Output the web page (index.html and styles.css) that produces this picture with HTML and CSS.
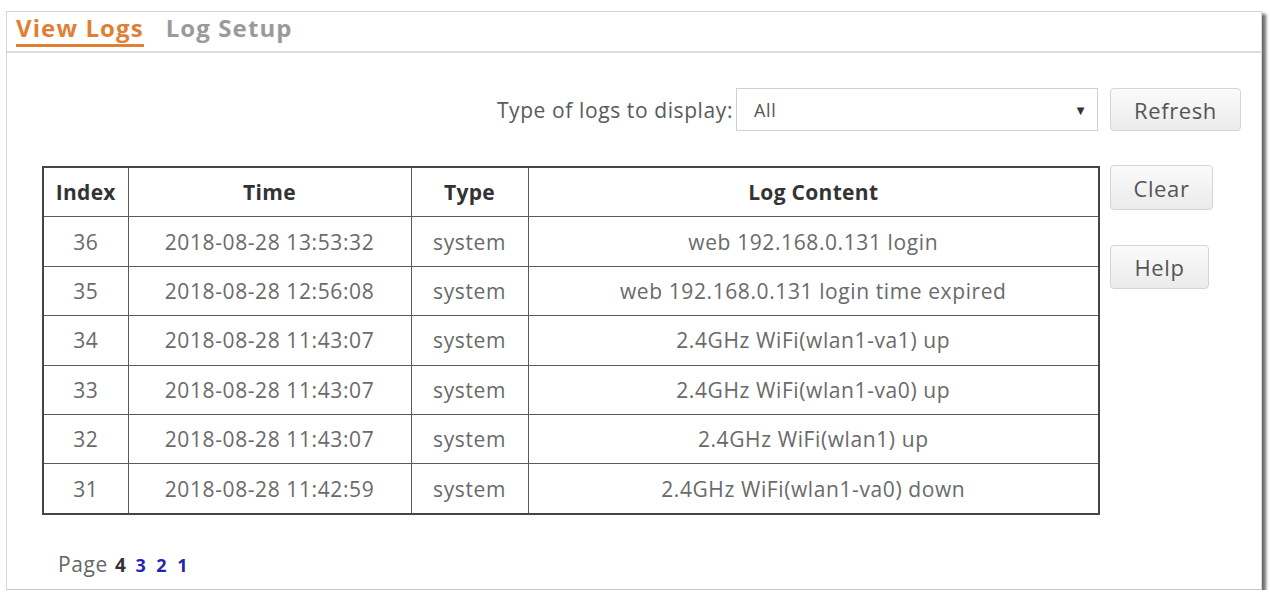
FILE: index.html
```html
<!DOCTYPE html>
<html>
<head>
<meta charset="utf-8">
<link rel="stylesheet" href="styles.css">
</head>
<body>
<div class="frame">
  <div class="tabs">
    <span class="tab active">View Logs</span>
    <span class="tab">Log Setup</span>
  </div>
  <div class="content">
    <div class="controls">
      <span class="label">Type of logs to display:</span>
      <div class="select"><span>All</span><span class="arrow">&#9660;</span></div>
    </div>
    <div class="side-top"><button class="btn btn-refresh">Refresh</button></div>
    <table class="logs">
      <colgroup>
        <col class="c-index"><col class="c-time"><col class="c-type"><col class="c-content">
      </colgroup>
      <thead>
        <tr><th>Index</th><th>Time</th><th>Type</th><th>Log Content</th></tr>
      </thead>
      <tbody>
        <tr><td>36</td><td>2018-08-28 13:53:32</td><td>system</td><td>web 192.168.0.131 login</td></tr>
        <tr><td>35</td><td>2018-08-28 12:56:08</td><td>system</td><td>web 192.168.0.131 login time expired</td></tr>
        <tr><td>34</td><td>2018-08-28 11:43:07</td><td>system</td><td>2.4GHz WiFi(wlan1-va1) up</td></tr>
        <tr><td>33</td><td>2018-08-28 11:43:07</td><td>system</td><td>2.4GHz WiFi(wlan1-va0) up</td></tr>
        <tr><td>32</td><td>2018-08-28 11:43:07</td><td>system</td><td>2.4GHz WiFi(wlan1) up</td></tr>
        <tr><td>31</td><td>2018-08-28 11:42:59</td><td>system</td><td>2.4GHz WiFi(wlan1-va0) down</td></tr>
      </tbody>
    </table>
    <div class="side">
      <button class="btn btn-clear">Clear</button>
      <button class="btn btn-help">Help</button>
    </div>
  </div>
  <div class="pager"><span class="pl">Page</span><b class="cur">4</b><a class="pg">3</a><a class="pg">2</a><a class="pg">1</a></div>
</div>
</body>
</html>
```

FILE: styles.css
```css
html, body {
  margin: 0;
  padding: 0;
  background: #ffffff;
}
body {
  font-family: "Open Sans", "DejaVu Sans", sans-serif;
  color: #666;
  letter-spacing: 0.6px;
}
.frame {
  margin: 11px 8px 0 6px;
  height: 579px;
  border: 1px solid #d6d6d6;
  border-bottom: 1px solid #c8c8c8;
  box-shadow: 4px 3px 3px #6e6e6e;
  background: #fff;
  box-sizing: border-box;
  display: flex;
  flex-direction: column;
}
.tabs {
  height: 39px;
  border-bottom: 2px solid #dcdcdc;
  display: flex;
  align-items: flex-end;
  padding-left: 9px;
  gap: 22px;
}
.tab {
  font-size: 24px;
  font-weight: bold;
  color: #9a9a9a;
  letter-spacing: 1.1px;
  line-height: 30px;
  padding-bottom: 8px;
}
.tab.active {
  color: #e07f36;
  border-bottom: 3px solid #e07f36;
  padding-bottom: 1px;
  margin-bottom: 4px;
}
.content {
  display: grid;
  grid-template-columns: 1056px 130px;
  column-gap: 12px;
  row-gap: 35px;
  padding: 35px 0 0 35px;
}
.controls {
  display: flex;
  justify-content: flex-end;
  align-items: center;
  gap: 3px;
}
.label {
  font-size: 21px;
  color: #5a5a5a;
}
.select {
  width: 362px;
  height: 43px;
  box-sizing: border-box;
  border: 1px solid #cfcfcf;
  display: flex;
  align-items: center;
  justify-content: space-between;
  padding: 0 12px 0 17px;
  font-size: 18px;
  color: #555;
}
.arrow {
  font-size: 10px;
  color: #333;
}
.btn {
  font-family: "Open Sans", "DejaVu Sans", sans-serif;
  letter-spacing: 0.6px;
  background: linear-gradient(#fbfbfb, #ebebeb);
  border: 1px solid #d4d4d4;
  border-radius: 4px;
  color: #555;
  font-size: 22px;
  padding: 0;
  box-sizing: border-box;
}
.btn-refresh { width: 131px; height: 43px; }
.side {
  display: flex;
  flex-direction: column;
  align-items: flex-start;
  gap: 35px;
}
.btn-clear { width: 103px; height: 45px; margin-top: -1px; }
.btn-help { width: 99px; height: 44px; }
.logs {
  border-collapse: collapse;
  width: 1056px;
  table-layout: fixed;
  border: 2px solid #454545;
}
.c-index { width: 85px; }
.c-time { width: 283px; }
.c-type { width: 117px; }
.c-content { width: 571px; }
.logs th, .logs td {
  border: 1.5px solid #5a5a5a;
  text-align: center;
  height: 48.4px;
  padding: 0;
}
.logs th {
  font-size: 21px;
  font-weight: bold;
  letter-spacing: 0.3px;
  color: #333;
}
.logs td {
  font-size: 21px;
  color: #6a6a6a;
}
.pager {
  margin: 35px 0 0 51px;
  font-size: 21px;
  color: #666;
  display: flex;
  align-items: baseline;
}
.pager .pl {
  margin-right: 7px;
}
.pager .cur {
  color: #333;
  font-size: 19px;
  margin-right: 9px;
}
.pager .pg {
  color: #2424b0;
  font-weight: bold;
  font-size: 18px;
  margin-right: 10px;
}
```
